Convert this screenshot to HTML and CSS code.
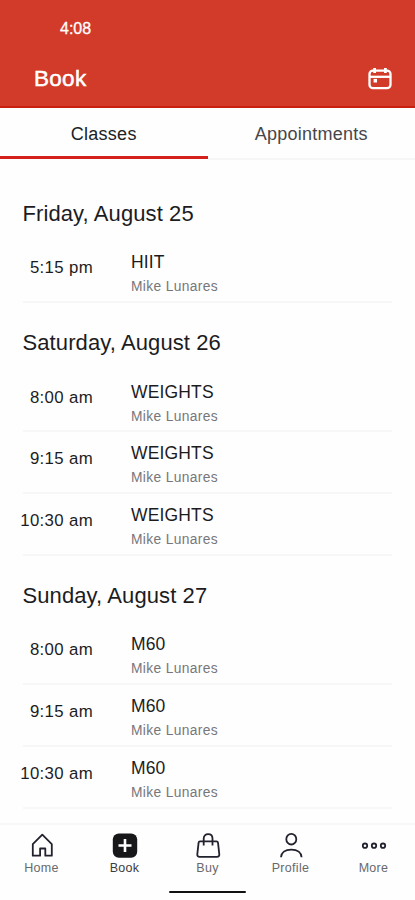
FILE: index.html
```html
<!DOCTYPE html>
<html lang="en">
<head>
<meta charset="utf-8">
<title>Book</title>
<link rel="stylesheet" href="styles.css">
</head>
<body>
<div class="app">
  <header class="header">
    <div class="clock">4:08</div>
    <div class="bar">
      <h1 class="title">Book</h1>
      <svg class="calendar" width="26" height="24" viewBox="0 0 26 24" fill="none" stroke="currentColor" stroke-width="2.300">
        <rect x="2.500" y="3.600" width="21" height="17.600" rx="3.500"/>
        <path d="M2.500 9.800H23.500"/>
        <path d="M7.600 1v5M18.400 1v5" stroke-width="2.800"/>
        <path d="M6.600 13.700h3.400" stroke-width="3.600"/>
      </svg>
    </div>
  </header>
  <nav class="tabs">
    <a class="tab active">Classes</a>
    <a class="tab">Appointments</a>
  </nav>
  <main class="schedule">
    <section>
      <h2 class="day">Friday, August 25</h2>
      <div class="row"><time class="time">5:15 pm</time><div><div class="name">HIIT</div><div class="coach">Mike Lunares</div></div></div>
    </section>
    <section>
      <h2 class="day">Saturday, August 26</h2>
      <div class="row"><time class="time">8:00 am</time><div><div class="name">WEIGHTS</div><div class="coach">Mike Lunares</div></div></div>
      <div class="row"><time class="time">9:15 am</time><div><div class="name">WEIGHTS</div><div class="coach">Mike Lunares</div></div></div>
      <div class="row"><time class="time">10:30 am</time><div><div class="name">WEIGHTS</div><div class="coach">Mike Lunares</div></div></div>
    </section>
    <section>
      <h2 class="day">Sunday, August 27</h2>
      <div class="row"><time class="time">8:00 am</time><div><div class="name">M60</div><div class="coach">Mike Lunares</div></div></div>
      <div class="row"><time class="time">9:15 am</time><div><div class="name">M60</div><div class="coach">Mike Lunares</div></div></div>
      <div class="row"><time class="time">10:30 am</time><div><div class="name">M60</div><div class="coach">Mike Lunares</div></div></div>
    </section>
  </main>
  <footer class="footer">
    <nav class="nav">
      <a class="item">
        <svg class="icon" viewBox="0 0 28 28"><path d="M4.800 12.200 14.300 2.700l9.500 9.500v11.500h-6.500v-7.200h-5.200v7.200H4.800z"/></svg>
        <span>Home</span>
      </a>
      <a class="item current">
        <svg class="icon" viewBox="0 0 28 28"><rect class="solid" x="1.800" y="1.400" width="24.400" height="24.400" rx="6"/><path class="plus" d="M14 7v13M7.500 13.500h13"/></svg>
        <span>Book</span>
      </a>
      <a class="item">
        <svg class="icon" viewBox="0 0 28 28"><path d="M6 9.300h16.400q1.400 0 1.600 1.400l1.300 11.600q.2 2.500-2.300 2.500H5.600q-2.500 0-2.300-2.500l1.300-11.600q.2-1.400 1.400-1.400zM9.700 13.500V6.500C9.700 3.800 11.500 2.200 14.100 2.200s4.400 1.600 4.400 4.300V13.500"/></svg>
        <span>Buy</span>
      </a>
      <a class="item">
        <svg class="icon" viewBox="0 0 28 28"><ellipse cx="14.300" cy="7.200" rx="5" ry="5.300"/><path d="M4 25.300c.2-4.600 4-7.700 10.300-7.700s10.100 3.100 10.300 7.700"/></svg>
        <span>Profile</span>
      </a>
      <a class="item">
        <svg class="icon" viewBox="0 0 28 28"><circle cx="5" cy="13.700" r="2.200"/><circle cx="14" cy="13.700" r="2.200"/><circle cx="23" cy="13.700" r="2.200"/></svg>
        <span>More</span>
      </a>
    </nav>
    <div class="home-bar"></div>
  </footer>
</div>
</body>
</html>
```
FILE: styles.css
```css
* { box-sizing: border-box; }
body {
  margin: 0;
  background: #fefefe;
  color: #1c1c1e;
  font-family: "Liberation Sans", Arial, sans-serif;
}
.app {
  width: 415px;
  height: 900px;
  display: flex;
  flex-direction: column;
  overflow: hidden;
}
.header {
  flex: none;
  height: 108px;
  padding-top: 19px;
  background: #d23b2a;
  border-bottom: 2px solid #c9200f;
  color: #fff;
}
.clock {
  padding-left: 60px;
  font-size: 16px;
  line-height: 20px;
  -webkit-text-stroke: 0.3px;
}
.bar {
  display: flex;
  align-items: center;
  justify-content: space-between;
  margin-top: 24px;
  padding: 0 22px 0 34px;
  height: 32px;
}
.title {
  margin: 0;
  font-size: 22.5px;
  font-weight: 400;
  letter-spacing: 0.3px;
  -webkit-text-stroke: 0.5px;
}
.calendar { display: block; }
.tabs {
  flex: none;
  display: flex;
  height: 52px;
}
.tab {
  flex: 1;
  text-align: center;
  font-size: 18px;
  letter-spacing: 0.25px;
  line-height: 52px;
  color: #45464a;
  border-bottom: 2px solid #f6f6f6;
}
.active {
  color: #202124;
  border-bottom: 3px solid #d5211d;
  height: 51px;
}
.schedule {
  flex: none;
  height: 663px;
  padding: 13px 23px 0;
}
.day {
  margin: 0 0 0 -0.5px;
  height: 67.4px;
  padding-top: 28px;
  font-size: 22px;
  font-weight: 400;
  line-height: 26px;
  letter-spacing: 0.1px;
}
.row {
  display: flex;
  height: 61.8px;
  border-bottom: 2px solid #f7f7f7;
  position: relative;
  top: 1px;
}
.time {
  flex: none;
  width: 78px;
  margin: 16px 30px 0 -8px;
  text-align: right;
  white-space: nowrap;
  font-size: 16.8px;
  line-height: 22px;
  letter-spacing: 0.35px;
}
.name {
  margin-top: 10px;
  padding-left: 8px;
  font-size: 17.5px;
  line-height: 22px;
  letter-spacing: 0.15px;
}
.coach {
  margin-top: 5px;
  padding-left: 8px;
  font-size: 13.8px;
  line-height: 18px;
  letter-spacing: 0.35px;
  color: #77777b;
}
.footer {
  flex: 1;
  border-top: 2px solid #f7f7f7;
}
.nav { display: flex; }
.item {
  flex: 1;
  display: flex;
  flex-direction: column;
  align-items: center;
  padding-top: 7px;
  font-size: 12.5px;
  line-height: 16px;
  letter-spacing: 0.3px;
  color: #68696d;
}
.current { color: #3c3c40; }
.icon {
  width: 28px;
  height: 28px;
  fill: none;
  stroke: #22222e;
  stroke-width: 1.8;
  stroke-linejoin: round;
}
.icon .solid { fill: #17171a; stroke: none; }
.icon .plus { stroke: #fff; stroke-width: 2.6; }
.home-bar {
  width: 77px;
  height: 2px;
  margin: 15px auto 0;
  border-radius: 1px;
  background: #111;
}
```
